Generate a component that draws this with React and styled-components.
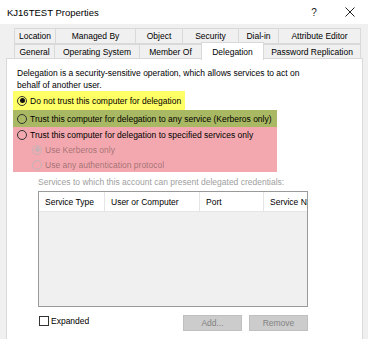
import React from 'react';
import styled, { createGlobalStyle } from 'styled-components';

const GlobalStyle = createGlobalStyle`
  html, body {
    margin: 0;
    padding: 0;
    background: #fff;
    overflow: hidden;
  }
  body {
    font-family: "Liberation Sans", Arial, sans-serif;
  }
`;

const tabRows = [
  [
    { label: 'Location', width: 42 },
    { label: 'Managed By', width: 81 },
    { label: 'Object', width: 48 },
    { label: 'Security', width: 57 },
    { label: 'Dial-in', width: 41 },
    { label: 'Attribute Editor', width: 83 },
  ],
  [
    { label: 'General', width: 41 },
    { label: 'Operating System', width: 86 },
    { label: 'Member Of', width: 63 },
    { label: 'Delegation', width: 63, active: true },
    { label: 'Password Replication', width: 98 },
  ],
];

const columns = [
  { label: 'Service Type', width: 66 },
  { label: 'User or Computer', width: 95 },
  { label: 'Port', width: 64 },
  { label: 'Service Name', width: 80 },
];

const App = () => {
  return (
    <>
      <GlobalStyle />
      <Window>
        <TitleBar>
          <Title>KJ16TEST Properties</Title>
          <TitleButtons>
            <Help>?</Help>
            <Close>
              <svg width="10" height="10" viewBox="0 0 10 10">
                <path d="M0.5 0.5 L9.5 9.5 M9.5 0.5 L0.5 9.5" stroke="#222" strokeWidth="1" fill="none" />
              </svg>
            </Close>
          </TitleButtons>
        </TitleBar>
        <Body>
          <Tabs>
            {tabRows.map((row, r) => (
              <TabRow key={r} $height={r === 0 ? 16 : 15}>
                {row.map((t) => (
                  <Tab key={t.label} $width={t.width} $active={t.active}>
                    {t.label}
                  </Tab>
                ))}
              </TabRow>
            ))}
          </Tabs>
          <Panel>
            <Description>
              Delegation is a security-sensitive operation, which allows services to act on
              <br />
              behalf of another user.
            </Description>

            <Highlight $color="#ffff66" $width={172} $height={19}>
              <Option>
                <Radio $checked />
                <OptionText>Do not trust this computer for delegation</OptionText>
              </Option>
            </Highlight>

            <Highlight $color="#a9b862" $width={264} $height={17}>
              <Option>
                <Radio />
                <OptionText>Trust this computer for delegation to any service (Kerberos only)</OptionText>
              </Option>
            </Highlight>

            <Highlight $color="#f2a8ae" $width={264} $height={45} $column>
              <SubRow>
                <Radio />
                <OptionText>Trust this computer for delegation to specified services only</OptionText>
              </SubRow>
              <SubRow $indent>
                <Radio $checked $disabled />
                <OptionText $disabled>Use Kerberos only</OptionText>
              </SubRow>
              <SubRow $indent>
                <Radio $disabled />
                <OptionText $disabled>Use any authentication protocol</OptionText>
              </SubRow>
            </Highlight>

            <ServicesLabel>Services to which this account can present delegated credentials:</ServicesLabel>

            <ListBox>
              <ListHeader>
                {columns.map((c) => (
                  <HeaderCell key={c.label} $width={c.width}>
                    {c.label}
                  </HeaderCell>
                ))}
              </ListHeader>
              <ListBody />
            </ListBox>

            <Footer>
              <CheckLabel>
                <CheckBox />
                <span>Expanded</span>
              </CheckLabel>
              <Buttons>
                <Button disabled>Add...</Button>
                <Button disabled>Remove</Button>
              </Buttons>
            </Footer>
          </Panel>
        </Body>
      </Window>
    </>
  );
};

export default App;

const Window = styled.div`
  width: 368px;
  height: 339px;
  display: flex;
  flex-direction: column;
  background: #f0f0f0;
  overflow: hidden;
`;

const TitleBar = styled.div`
  height: 24px;
  flex-shrink: 0;
  background: #fff;
  display: flex;
  align-items: center;
  justify-content: space-between;
  padding-left: 7px;
`;

const Title = styled.div`
  font-size: 9.5px;
  color: #000;
`;

const TitleButtons = styled.div`
  display: flex;
  align-items: center;
  height: 100%;
`;

const Help = styled.div`
  width: 36px;
  text-align: center;
  font-size: 10px;
  color: #222;
`;

const Close = styled.div`
  width: 36px;
  display: flex;
  justify-content: center;
  align-items: center;
  margin-right: 0;
`;

const Body = styled.div`
  flex: 1;
  display: flex;
  flex-direction: column;
  padding: 4px 5px 0 6px;
  min-height: 0;
`;

const Tabs = styled.div`
  display: flex;
  flex-direction: column;
  padding-left: 8px;
  position: relative;
  z-index: 1;
`;

const TabRow = styled.div`
  display: flex;
  height: ${(p) => p.$height}px;
  align-items: flex-end;
`;

const Tab = styled.div`
  box-sizing: border-box;
  width: ${(p) => p.$width}px;
  height: ${(p) => (p.$active ? 'calc(100% + 3px)' : '100%')};
  margin-left: -1px;
  margin-bottom: ${(p) => (p.$active ? '-1px' : '0')};
  border: 1px solid #d9d9d9;
  border-bottom: ${(p) => (p.$active ? 'none' : '1px solid #d9d9d9')};
  background: ${(p) => (p.$active ? '#fff' : '#f0f0f0')};
  font-size: 8.5px;
  color: #000;
  display: flex;
  align-items: center;
  justify-content: center;
  white-space: nowrap;
  &:first-child {
    margin-left: 0;
  }
`;

const Panel = styled.div`
  flex: 1;
  background: #fff;
  border: 1px solid #d9d9d9;
  border-bottom: none;
  margin-top: -1px;
  padding: 9px 0 0 6px;
  display: flex;
  flex-direction: column;
`;

const Description = styled.div`
  font-size: 8.5px;
  line-height: 11.5px;
  color: #000;
  padding-left: 4px;
  white-space: nowrap;
`;

const Highlight = styled.div`
  width: ${(p) => p.$width}px;
  height: ${(p) => p.$height}px;
  background: ${(p) => p.$color};
  display: flex;
  flex-direction: ${(p) => (p.$column ? 'column' : 'row')};
  align-items: ${(p) => (p.$column ? 'stretch' : 'center')};
`;

const Option = styled.div`
  display: flex;
  align-items: center;
  padding-left: 4px;
`;

const SubRow = styled.div`
  height: 15px;
  display: flex;
  align-items: center;
  padding-left: ${(p) => (p.$indent ? '19px' : '4px')};
`;

const Radio = styled.span`
  box-sizing: border-box;
  width: 10px;
  height: 10px;
  border-radius: 50%;
  border: 1px solid ${(p) => (p.$disabled ? '#c4b4b6' : '#333')};
  background: transparent;
  display: inline-flex;
  align-items: center;
  justify-content: center;
  flex-shrink: 0;
  &::after {
    content: '';
    display: ${(p) => (p.$checked ? 'block' : 'none')};
    width: 5px;
    height: 5px;
    border-radius: 50%;
    background: ${(p) => (p.$disabled ? '#c9b2b5' : '#111')};
  }
`;

const OptionText = styled.span`
  font-size: 8.5px;
  margin-left: 3px;
  white-space: nowrap;
  color: ${(p) => (p.$disabled ? 'rgba(0, 0, 0, 0.36)' : '#000')};
`;

const ServicesLabel = styled.div`
  font-size: 8.5px;
  line-height: 12px;
  color: #a0a0a0;
  margin: 4px 0 0 25px;
  white-space: nowrap;
`;

const ListBox = styled.div`
  box-sizing: border-box;
  width: 270px;
  height: 116px;
  margin: 3px 0 0 25px;
  border: 1px solid #9a9a9a;
  display: flex;
  flex-direction: column;
  overflow: hidden;
`;

const ListHeader = styled.div`
  height: 19px;
  flex-shrink: 0;
  background: #fff;
  display: flex;
  border-bottom: 1px solid #e5e5e5;
`;

const HeaderCell = styled.div`
  box-sizing: border-box;
  width: ${(p) => p.$width}px;
  flex-shrink: 0;
  border-right: 1px solid #e5e5e5;
  font-size: 8.5px;
  padding-left: 6px;
  display: flex;
  align-items: center;
  white-space: nowrap;
  overflow: hidden;
`;

const ListBody = styled.div`
  flex: 1;
  background: #f0f0f0;
`;

const Footer = styled.div`
  width: 270px;
  margin: 8px 0 0 25px;
  display: flex;
  align-items: flex-start;
`;

const CheckLabel = styled.label`
  display: flex;
  align-items: center;
  font-size: 8.5px;
  color: #000;
  height: 11px;
  padding-left: 1px;
`;

const CheckBox = styled.span`
  box-sizing: border-box;
  width: 10px;
  height: 10px;
  border: 1px solid #333;
  background: #fff;
  margin-right: 2px;
`;

const Buttons = styled.div`
  margin-left: auto;
  display: flex;
  gap: 7px;
`;

const Button = styled.button`
  box-sizing: border-box;
  width: 59px;
  height: 16px;
  padding: 0;
  background: #cccccc;
  border: 1px solid #bfbfbf;
  color: #838383;
  font-family: "Liberation Sans", Arial, sans-serif;
  font-size: 8.5px;
`;
